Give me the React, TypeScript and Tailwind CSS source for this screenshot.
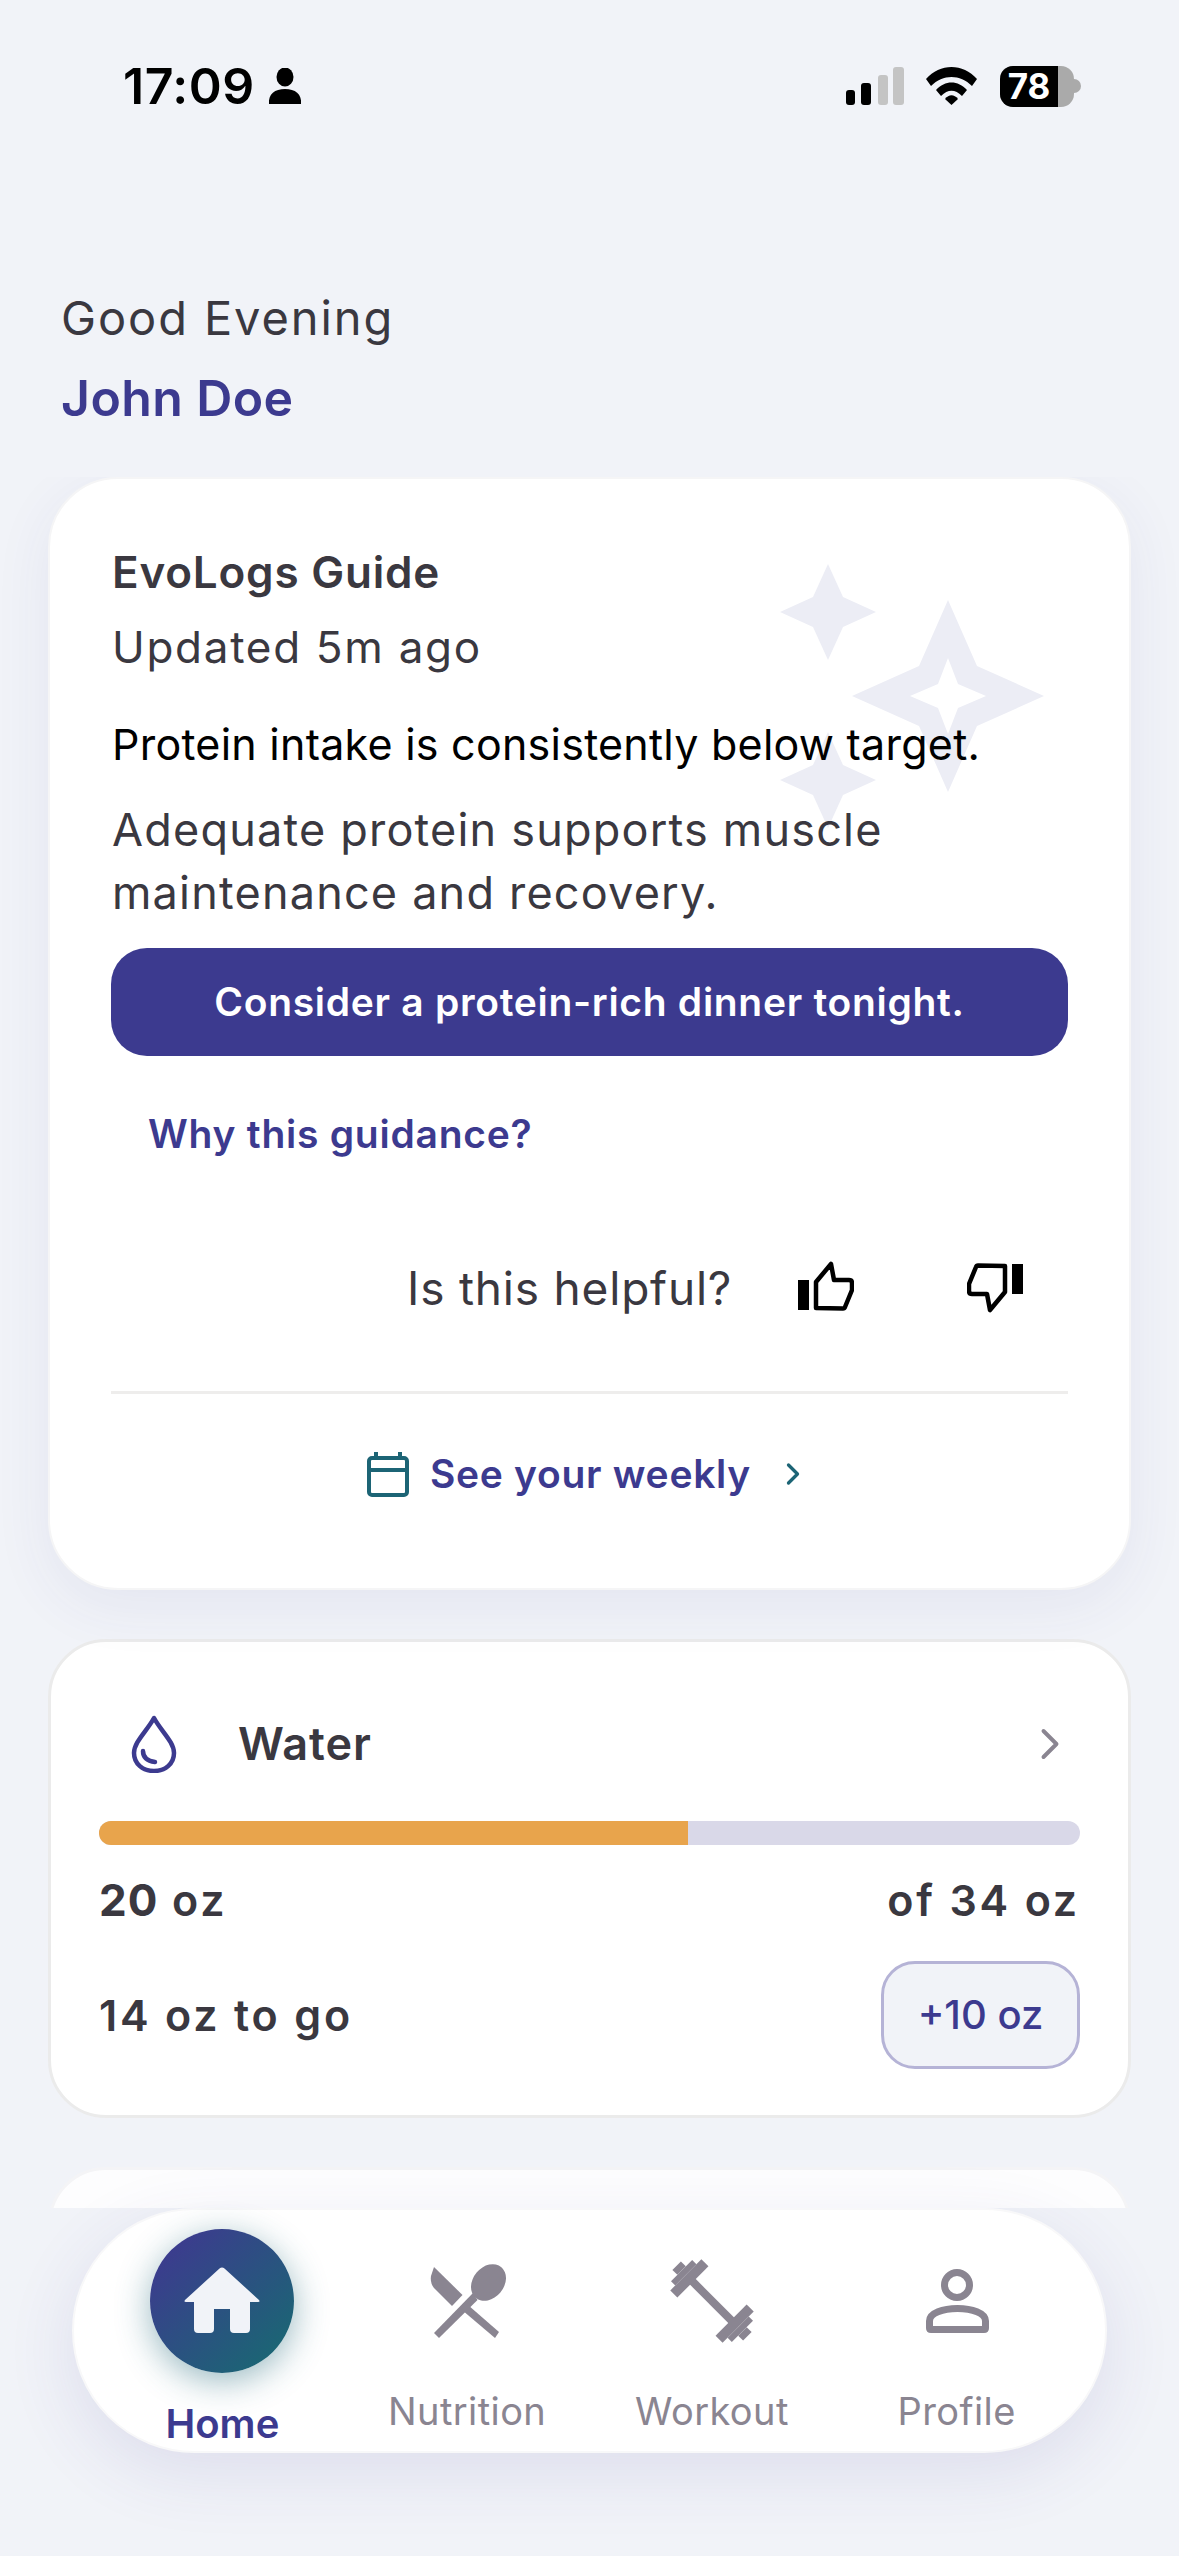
import React from 'react';
import { ChevronRight } from 'lucide-react';

const Sparkles: React.FC = () => (
  <svg className="absolute left-[729px] top-[85px] w-[280px] h-[288px] text-[#ecedf5]" viewBox="0 0 280 288" fill="currentColor">
    <path d="M49 0 L64 33 L97 48 L64 63 L49 96 L34 63 L1 48 L34 33 Z" />
    <path d="M49 168 L64 201 L97 216 L64 231 L49 264 L34 231 L1 216 L34 201 Z" />
    <path fillRule="evenodd" d="M169 36 L198 102 L265 132 L198 162 L169 228 L140 162 L73 132 L140 102 Z M169 94 L159 120 L131 132 L159 144 L169 170 L179 144 L207 132 L179 120 Z" />
  </svg>
);

const ThumbUp: React.FC<{ className?: string }> = ({ className }) => (
  <svg className={className} viewBox="0 0 56 50">
    <rect x="0" y="19" width="11" height="30" fill="#000" />
    <path d="M18 47 V21 L33 3 L36 19 H51 Q54 19 54 22 V29 L47 46 Q46.5 47.5 45 47.5 Z" fill="none" stroke="#000" strokeWidth="4.5" strokeLinejoin="round" />
  </svg>
);

const NavIcon: React.FC<{ name: string }> = ({ name }) => {
  if (name === 'Nutrition') {
    return (
      <svg className="w-[80px] h-[80px]" viewBox="0 0 80 80" fill="#8a8591">
        <path d="M7 6 L35.5 34 L25 45 L7 27 Q3 22 4 15 Z" />
        <path d="M35 49 L41 44 L72 71 L68 77 Z" />
        <path d="M46 32 L50.5 39 L12 77 L7 72 Z" />
        <ellipse cx="61.5" cy="21.5" rx="15.5" ry="20" transform="rotate(40 61.5 21.5)" />
      </svg>
    );
  }
  if (name === 'Workout') {
    return (
      <svg className="w-[80px] h-[80px] overflow-visible" viewBox="-40 -40 80 80" fill="#8a8591">
        <g transform="rotate(45)">
          <rect x="-28" y="-4" width="56" height="8" />
          <rect x="-37" y="-22" width="10" height="44" />
          <rect x="-43" y="-15" width="6" height="30" />
          <rect x="-50" y="-6" width="7" height="12" />
          <rect x="27" y="-22" width="10" height="44" />
          <rect x="37" y="-15" width="6" height="30" />
          <rect x="43" y="-6" width="7" height="12" />
        </g>
      </svg>
    );
  }
  return (
    <svg className="w-[80px] h-[80px]" viewBox="0 0 80 80" fill="none" stroke="#8a8591" strokeWidth="7">
      <circle cx="40" cy="24" r="12.5" />
      <path d="M12.5 60 C12.5 52 26 47.5 40.5 47.5 C55 47.5 68.5 52 68.5 60 V67 Q68.5 68.5 67 68.5 H14 Q12.5 68.5 12.5 67 Z" strokeLinejoin="round" />
    </svg>
  );
};

const App: React.FC = () => {
  return (
    <div className="w-[1179px] h-[2556px] flex flex-col overflow-hidden bg-[#f1f3f8] font-['Inter',sans-serif] text-[#3a3840]">
      {/* status bar */}
      <div className="h-[176px] shrink-0 flex items-start justify-between pl-[123px] pr-[98px] pt-[58px]">
        <div className="flex items-center gap-[13px] h-[56px]">
          <span className="text-[50px] font-semibold text-black tracking-[0.5px] leading-[56px]">17:09</span>
          <svg className="w-[34px] h-[36px]" viewBox="0 0 34 36" fill="#000">
            <ellipse cx="17" cy="9" rx="8.5" ry="9.5" />
            <path d="M1 36 C0 26 7 21 17 21 C27 21 34 26 33 36 Z" />
          </svg>
        </div>
        <div className="flex items-center h-[56px]">
          <svg className="w-[58px] h-[38px]" viewBox="0 0 58 38">
            <rect x="0" y="23" width="9" height="15" rx="3" fill="#000" />
            <rect x="15" y="16" width="10" height="22" rx="3" fill="#000" />
            <rect x="32" y="8" width="10" height="30" rx="3" fill="#c4c4c4" />
            <rect x="47" y="0" width="11" height="38" rx="3" fill="#c4c4c4" />
          </svg>
          <svg className="w-[51px] h-[38px] ml-[22px]" viewBox="0 0 51 38" fill="#000">
            <path d="M0 12 C14 -4 37 -4 51 12 L46 19 C34 7 17 7 5 19 Z" />
            <path d="M10 23 C19 13 32 13 41 23 L36 29 C29 22 22 22 15 29 Z" />
            <path d="M19 32 C23 27 28 27 32 32 L25.5 38 Z" />
          </svg>
          <div className="ml-[23px] flex items-center">
            <div className="w-[74px] h-[41px] rounded-[13px] bg-[#aaaaaa] flex">
              <div className="w-[58px] h-full rounded-l-[13px] bg-black text-white text-[35px] font-bold leading-[41px] text-center">78</div>
            </div>
            <div className="w-[7px] h-[14px] rounded-r-full bg-[#aaaaaa]" />
          </div>
        </div>
      </div>

      {/* greeting */}
      <div className="h-[301px] shrink-0 pl-[61px] pt-[114px]">
        <div className="text-[47px] leading-[56px] tracking-[1.9px]">Good Evening</div>
        <div className="mt-[24px] text-[50px] leading-[56px] font-semibold text-[#3c3a8f] tracking-[0.4px]">John Doe</div>
      </div>

      {/* scroll area */}
      <div className="h-[1731px] shrink-0 overflow-hidden px-[48px] flex flex-col">
        <div className="relative shrink-0 h-[1113px] rounded-[70px] bg-white border-2 border-[#f5f5f6] shadow-[0_16px_60px_rgba(60,58,143,0.07)] px-[61px] pt-[65px]">
          <Sparkles />
          <div className="relative">
            <div className="pl-[1px] text-[44px] leading-[56px] font-semibold tracking-[0.8px]">EvoLogs Guide</div>
            <div className="pl-[1px] mt-[19px] text-[44px] leading-[56px] tracking-[1.7px]">Updated 5m ago</div>
            <div className="pl-[1px] mt-[41px] text-[43px] leading-[56px] text-black tracking-[0.25px]">Protein intake is consistently below target.</div>
            <div className="pl-[1px] mt-[26px] text-[45px] leading-[63px] tracking-[1.2px] w-[880px]">Adequate protein supports muscle maintenance and recovery.</div>
            <div className="mt-[24px] h-[108px] rounded-[36px] bg-[#3c3a8f] text-white text-[39px] font-semibold tracking-[0.7px] flex items-center justify-center">Consider a protein-rich dinner tonight.</div>
            <div className="mt-[50px] pl-[37px] text-[39px] leading-[56px] font-semibold text-[#3c3a8f] tracking-[0.75px]">Why this guidance?</div>
            <div className="mt-[98px] h-[56px] flex items-center pl-[296px]">
              <span className="text-[46px] tracking-[0.8px]">Is this helpful?</span>
              <ThumbUp className="w-[56px] h-[50px] ml-[66px] -mt-[4px]" />
              <ThumbUp className="w-[56px] h-[50px] ml-[113px] rotate-180" />
            </div>
            <div className="mt-[75px] h-[3px] bg-[#eeedec]" />
            <div className="mt-[52px] h-[56px] flex items-center pl-[256px]">
              <svg className="w-[42px] h-[46px]" viewBox="0 0 42 46" fill="none" stroke="#1c6475" strokeWidth="4">
                <rect x="2" y="7" width="38" height="37" rx="3" />
                <path d="M2 19 H40 M9 1 V7 M33 1 V7" />
              </svg>
              <span className="ml-[21px] text-[39px] font-semibold text-[#3c3a8f] tracking-[0.7px]">See your weekly</span>
              <ChevronRight className="ml-[24px] w-[36px] h-[36px] text-[#1c6475]" strokeWidth={2.2} />
            </div>
          </div>
        </div>

        {/* water */}
        <div className="mt-[49px] shrink-0 h-[479px] rounded-[58px] bg-white border-[3px] border-[#ebebeb] px-[48px] pt-[70px]">
          <div className="h-[64px] flex items-center">
            <svg className="w-[46px] h-[58px] ml-[32px]" viewBox="0 0 46 58" fill="none" stroke="#3c3a8f" strokeWidth="4.5">
              <path d="M23 3 C16 16 3 27 3 38 C3 49 12 56 23 56 C34 56 43 49 43 38 C43 27 30 16 23 3 Z" strokeLinejoin="round" />
              <path d="M12 36 C12 42 16 46 24 47" strokeLinecap="round" />
            </svg>
            <span className="ml-[61px] text-[45px] font-semibold tracking-[0.9px]">Water</span>
            <ChevronRight className="ml-auto mr-[4px] w-[52px] h-[52px] text-[#8a8591]" strokeWidth={1.8} />
          </div>
          <div className="mt-[45px] h-[24px] rounded-full bg-[#d9d8e8] overflow-hidden">
            <div className="h-full w-[60%] bg-[#e8a44c]" />
          </div>
          <div className="mt-[32px] h-[46px] flex items-center justify-between text-[43px] font-semibold tracking-[2.8px]">
            <span><span className="text-[44px] font-bold tracking-[1px]">20</span> oz</span>
            <span>of 34 oz</span>
          </div>
          <div className="mt-[38px] flex items-center justify-between">
            <span className="text-[43px] font-semibold tracking-[2.8px]">14 oz to go</span>
            <div className="w-[199px] h-[108px] rounded-[34px] border-[3px] border-[#b5b3d6] bg-[#f1f3f8] flex items-center justify-center text-[40px] font-medium text-[#3c3a8f]">+10 oz</div>
          </div>
        </div>

        {/* next card, cut off by the nav */}
        <div className="mt-[49px] shrink-0 h-[479px] rounded-[58px] bg-[#fdfdfe] border-[3px] border-[#f4f4f6]" />
      </div>

      {/* bottom nav */}
      <div className="flex-1 px-[72px]">
        <nav className="h-[245px] rounded-full bg-white border-2 border-[#f8f8f9] shadow-[0_20px_70px_rgba(60,58,143,0.11)] px-[26px] grid grid-cols-4">
          <div className="flex flex-col items-center pt-[19px]">
            <div className="w-[144px] h-[144px] rounded-full bg-[linear-gradient(135deg,#3d3a8f_10%,#1c6475_85%)] shadow-[0_8px_34px_rgba(28,100,117,0.45)] flex items-center justify-center">
              <svg className="w-[76px] h-[68px]" viewBox="0 0 76 68" fill="#f1f3f8">
                <path d="M35.5 1.5 Q38 -0.5 40.5 1.5 L75 33 Q76.5 35 74 35 H66 V62 Q66 66 62 66 H50 Q46 66 46 62 V42 H30 V62 Q30 66 26 66 H14 Q10 66 10 62 V35 H2 Q-0.5 35 1 33 Z" />
              </svg>
            </div>
            <span className="mt-[27px] text-[40px] leading-[48px] font-semibold text-[#3c3a8f]">Home</span>
          </div>
          {['Nutrition', 'Workout', 'Profile'].map(label => (
            <div key={label} className="flex flex-col items-center pt-[51px]">
              <NavIcon name={label} />
              <span className="mt-[47px] text-[38px] leading-[46px] text-[#8a8591] tracking-[0.4px]">{label}</span>
            </div>
          ))}
        </nav>
      </div>
    </div>
  );
};

export default App;
